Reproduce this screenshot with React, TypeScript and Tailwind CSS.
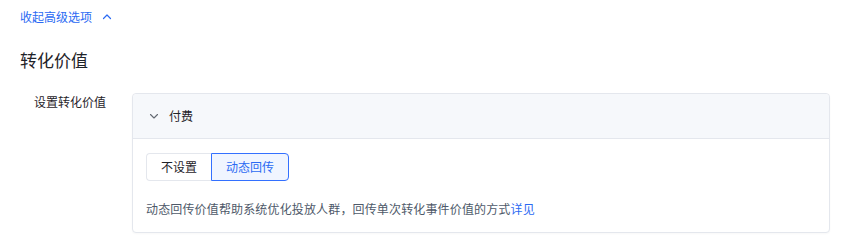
import React, { useState } from "react";

const font = { fontFamily: '"Noto Sans CJK SC", "Noto Sans", sans-serif' };

const ChevronUp = () => (
  <svg width="10" height="10" viewBox="0 0 10 10" fill="none">
    <path d="M1.5 6.5 L5 3 L8.5 6.5" stroke="currentColor" strokeWidth="1.2" strokeLinecap="round" strokeLinejoin="round" />
  </svg>
);

const ChevronDown = () => (
  <svg width="10" height="10" viewBox="0 0 10 10" fill="none">
    <path d="M1.5 3.5 L5 7 L8.5 3.5" stroke="currentColor" strokeWidth="1.1" strokeLinecap="round" strokeLinejoin="round" />
  </svg>
);

export default function App() {
  const [mode, setMode] = useState<"none" | "dynamic">("dynamic");

  return (
    <div className="w-[860px] h-[250px] bg-white pl-5 pt-[7px] text-[#1f2329]" style={font}>
      {/* collapse link */}
      <button className="flex items-center gap-[10px] text-xs leading-5 text-[#2b6af3]">
        收起高级选项
        <ChevronUp />
      </button>

      <h2 className="mt-[21px] text-[17px] leading-6 font-normal text-[#1f2329]">转化价值</h2>

      <div className="mt-[21px] flex items-start">
        <div className="w-[112px] pl-[14px] text-xs leading-5 text-[#1f2329] -mt-px">设置转化价值</div>

        <div className="w-[698px] rounded border border-[#e4e7ed] bg-white shadow-[0_1px_2px_rgba(0,0,0,0.03)]">
          <div className="h-[45px] flex items-center gap-[10px] pl-[16px] bg-[#f6f8fb] border-b border-[#e4e7ed] rounded-t text-xs text-[#1f2329]">
            <span className="text-[#646a73]">
              <ChevronDown />
            </span>
            付费
          </div>

          <div className="pt-[14px] pb-[13px] px-[13px]">
            <div className="flex">
              <button
                onClick={() => setMode("none")}
                className={
                  mode === "none"
                    ? "h-7 px-[14px] text-xs rounded-l border border-[#3370ff] bg-[#f0f5ff] text-[#2b6af3]"
                    : "h-7 px-[14px] text-xs rounded-l border border-[#e4e7ed] border-r-0 bg-white text-[#1f2329]"
                }
              >
                不设置
              </button>
              <button
                onClick={() => setMode("dynamic")}
                className={
                  mode === "dynamic"
                    ? "h-7 px-[14px] text-xs rounded-r border border-[#3370ff] bg-[#f0f5ff] text-[#2b6af3]"
                    : "h-7 px-[14px] text-xs rounded-r border border-[#e4e7ed] border-l-0 bg-white text-[#1f2329]"
                }
              >
                动态回传
              </button>
            </div>

            <p className="mt-[18px] text-xs leading-5 tracking-[0.15px] text-[#4e5969]">
              动态回传价值帮助系统优化投放人群，回传单次转化事件价值的方式
              <a className="text-[#2b6af3] cursor-pointer">详见</a>
            </p>
          </div>
        </div>
      </div>
    </div>
  );
}
